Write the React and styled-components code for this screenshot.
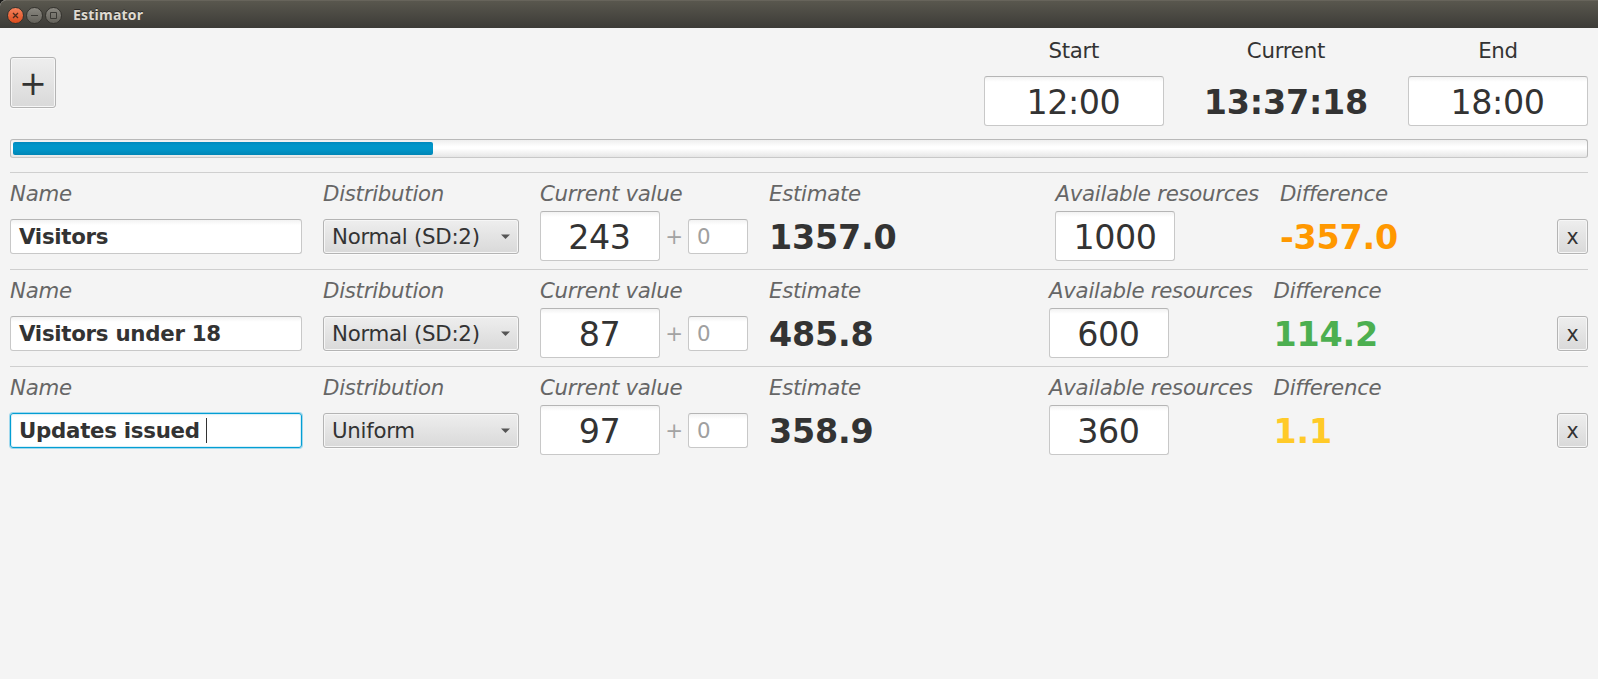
import React from "react";
import styled, { createGlobalStyle, css } from "styled-components";

const GlobalStyle = createGlobalStyle`
  *, *::before, *::after { box-sizing: border-box; }
  body {
    margin: 0;
    background: #f4f4f4;
    color: #333333;
    font-family: "DejaVu Sans", sans-serif;
    font-size: 21.33px;
    letter-spacing: -0.28px;
  }
`;

const Window = styled.div`
  display: flex;
  flex-direction: column;
  width: 100%;
  height: 100vh;
  overflow: hidden;
  background: #f4f4f4;
`;

const TitleBar = styled.header`
  display: flex;
  align-items: center;
  flex: none;
  height: 28px;
  padding: 1px 0 0 7px;
  border-top: 1px solid #67645b;
  border-radius: 6px 0 0 0;
  background: linear-gradient(#59574e, #3c3b37);
  box-shadow: 0 -6px 0 6px #1a1a18;
`;

const WindowButton = styled.span`
  display: flex;
  width: 17px;
  height: 17px;
  margin-right: 2px;
  border-radius: 50%;
  border: 1px solid #34332e;
  background: ${({ $close }) =>
    $close
      ? "linear-gradient(#f4825c, #dc4b1c)"
      : "linear-gradient(#8a8881, #64625b)"};

  svg { display: block; width: 15px; height: 15px; }
`;

const WindowTitle = styled.h1`
  margin: 0 0 0 9px;
  font: bold 14px/20px "Open Sans", "Noto Sans", sans-serif;
  letter-spacing: 0.2px;
  color: #dfdbd2;
  text-shadow: 0 -1px 0 #2b2a27;
`;

const Content = styled.main`
  display: flex;
  flex-direction: column;
  padding: 11px 10px 0;
`;

const Toolbar = styled.div`
  display: flex;
  align-items: center;
  justify-content: space-between;
  height: 87px;
`;

const raised = css`
  border: 1px solid #b4b4b4;
  border-radius: 3px;
  background: linear-gradient(#eeeeee, #d9d9d9);
  box-shadow: inset 0 0 0 1px #f6f6f6, 0 1px 0 #fbfbfb;
  color: #333333;
  font-family: inherit;
  padding: 0;
`;

const AddButton = styled.button`
  ${raised}
  width: 46px;
  height: 51px;
  padding-top: 2px;
  font-size: 33.33px;
  line-height: 47px;
`;

const RemoveButton = styled.button`
  ${raised}
  display: block;
  width: 31px;
  height: 35px;
  padding-top: 2px;
  font-size: 20.5px;
  line-height: 31px;
`;

const Times = styled.div`
  display: flex;
  gap: 40px;
`;

const TimeColumn = styled.div`
  display: flex;
  flex-direction: column;
  align-items: center;
  justify-content: space-between;
  height: 87px;
`;

const TimeLabel = styled.span`
  line-height: 24px;
`;

const Field = styled.div`
  display: flex;
  align-items: center;
  flex: none;
  width: ${({ $width }) => $width}px;
  height: ${({ $large }) => ($large ? 50 : 35)}px;
  justify-content: ${({ $large }) => ($large ? "center" : "flex-start")};
  padding: ${({ $large }) => ($large ? "2px 1px 0 0" : "1px 8px 0")};
  border: 1px solid #c8c8c8;
  border-top-color: #b5b5b5;
  border-radius: 3px;
  background: linear-gradient(#f2f2f2, #ffffff 5px);
  font-size: ${({ $large }) => ($large ? 33.33 : 21.33)}px;
  letter-spacing: ${({ $large }) => ($large ? -0.45 : -0.28)}px;
  font-weight: ${({ $bold }) => ($bold ? "bold" : "normal")};
  color: ${({ $muted }) => ($muted ? "#a0a0a0" : "#333333")};
  white-space: pre;
  ${({ $focused }) =>
    $focused &&
    css`
      border-color: #039ed3;
      background: linear-gradient(#f8f8f8, #ffffff 4px);
      box-shadow: 0 0 0 1px #a0d8ed, inset 0 0 0 1px #d9eff7;
    `}
`;

const Caret = styled.span`
  width: 1px;
  height: 25px;
  margin-left: -1px;
  background: #333333;
`;

const BigValue = styled.strong`
  padding-top: 4px;
  font-size: 33.33px;
  line-height: 46px;
  letter-spacing: -0.2px;
  color: ${({ $color }) => $color || "#333333"};
`;

const Track = styled.div`
  height: 19px;
  margin-top: 13px;
  padding: 2px;
  border: 1px solid #b9b9b9;
  border-bottom-color: #c8c8c8;
  border-radius: 3px;
  background: linear-gradient(#eeeeee, #ffffff 40%, #ffffff 50%, #e6e6e6);
`;

const Progress = styled.div`
  width: ${({ $percent }) => $percent}%;
  height: 13px;
  border-radius: 2px;
  background: linear-gradient(#0088bd, #0096c9 25%, #0096c9 55%, #0085b5);
`;

const List = styled.div`
  margin-top: 14px;
`;

const Row = styled.section`
  display: flex;
  gap: 21px;
  height: 97px;
  padding-top: 8px;
  border-top: 1px solid #cfcfcf;
`;

const Cell = styled.div`
  flex: ${({ $grow }) => ($grow ? "1 0 auto" : "none")};
`;

const CellLabel = styled.div`
  height: 30px;
  line-height: 25px;
  font-style: italic;
  color: #666666;
  white-space: nowrap;
`;

const Control = styled.div`
  display: flex;
  align-items: center;
  height: 50px;
`;

const Plus = styled.span`
  width: 28px;
  padding-top: 1px;
  text-align: center;
  color: #a3a3a3;
`;

const Select = styled.div`
  ${raised}
  display: flex;
  align-items: center;
  justify-content: space-between;
  width: 196px;
  height: 35px;
  padding: 1px 8px 0;

  svg { display: block; margin-top: -1px; }
`;

const entries = [
  { name: "Visitors", distribution: "Normal (SD:2)", value: 243, estimate: "1357.0", resources: 1000, difference: "-357.0", color: "#ff9800" },
  { name: "Visitors under 18", distribution: "Normal (SD:2)", value: 87, estimate: "485.8", resources: 600, difference: "114.2", color: "#4caf50" },
  { name: "Updates issued ", distribution: "Uniform", value: 97, estimate: "358.9", resources: 360, difference: "1.1", color: "#ffca28", focused: true },
];

function LabeledCell({ label, grow, children }) {
  return (
    <Cell $grow={grow}>
      <CellLabel>{label}</CellLabel>
      <Control>{children}</Control>
    </Cell>
  );
}

function Entry({ entry }) {
  return (
    <Row>
      <LabeledCell label="Name">
        <Field $width={292} $bold $focused={entry.focused}>
          {entry.name}
          {entry.focused && <Caret />}
        </Field>
      </LabeledCell>
      <LabeledCell label="Distribution">
        <Select>
          {entry.distribution}
          <svg width="9" height="5" viewBox="0 0 9 5">
            <path d="M0 0.5h9L4.5 5z" fill="#555555" />
          </svg>
        </Select>
      </LabeledCell>
      <LabeledCell label="Current value">
        <Field $width={120} $large>{entry.value}</Field>
        <Plus>+</Plus>
        <Field $width={60} $muted>0</Field>
      </LabeledCell>
      <LabeledCell label="Estimate" grow>
        <BigValue>{entry.estimate}</BigValue>
      </LabeledCell>
      <LabeledCell label="Available resources">
        <Field $width={120} $large>{entry.resources}</Field>
      </LabeledCell>
      <LabeledCell label="Difference" grow>
        <BigValue $color={entry.color}>{entry.difference}</BigValue>
      </LabeledCell>
      <LabeledCell label="">
        <RemoveButton>x</RemoveButton>
      </LabeledCell>
    </Row>
  );
}

export default function App() {
  return (
    <>
      <GlobalStyle />
      <Window>
        <TitleBar>
          <WindowButton $close>
            <svg viewBox="0 0 15 15" fill="none" stroke="#4a2a1c" strokeWidth="1.3">
              <path d="M5 5l5 5M10 5l-5 5" />
            </svg>
          </WindowButton>
          <WindowButton>
            <svg viewBox="0 0 15 15" fill="none" stroke="#3a3935">
              <path d="M4 7.5h7" />
            </svg>
          </WindowButton>
          <WindowButton>
            <svg viewBox="0 0 15 15" fill="none" stroke="#3a3935">
              <path d="M4.5 4.5h6v6h-6z" />
            </svg>
          </WindowButton>
          <WindowTitle>Estimator</WindowTitle>
        </TitleBar>
        <Content>
          <Toolbar>
            <AddButton>+</AddButton>
            <Times>
              <TimeColumn>
                <TimeLabel>Start</TimeLabel>
                <Field $width={180} $large>12:00</Field>
              </TimeColumn>
              <TimeColumn>
                <TimeLabel>Current</TimeLabel>
                <BigValue>13:37:18</BigValue>
              </TimeColumn>
              <TimeColumn>
                <TimeLabel>End</TimeLabel>
                <Field $width={180} $large>18:00</Field>
              </TimeColumn>
            </Times>
          </Toolbar>
          <Track>
            <Progress $percent={26.73} />
          </Track>
          <List>
            {entries.map((entry) => (
              <Entry key={entry.name} entry={entry} />
            ))}
          </List>
        </Content>
      </Window>
    </>
  );
}
